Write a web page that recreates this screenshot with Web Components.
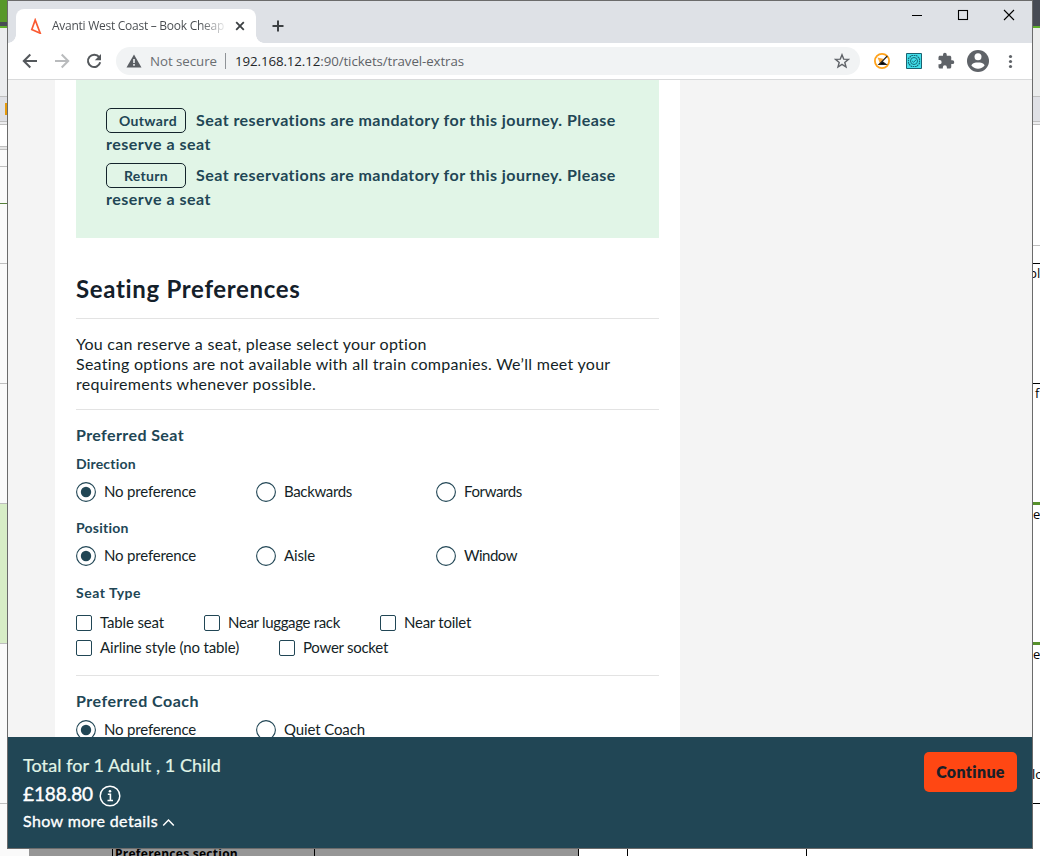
<!DOCTYPE html>
<html lang="en">
<head>
<meta charset="utf-8">
<title>Avanti West Coast – Book Cheap Train Tickets</title>
<style>
html, body { margin: 0; height: 856px; overflow: hidden; background: #fff; }
body { font-family: Lato, "Liberation Sans", sans-serif; }
</style>
</head>
<body>
<desk-top>
  <browser-window>
    <browser-tab slot="tab"></browser-tab>
    <address-bar slot="bar"></address-bar>
    <travel-extras></travel-extras>
    <basket-bar slot="footer"></basket-bar>
  </browser-window>
</desk-top>
<script>
const fitted = [];
function define(name, markup, Base = HTMLElement) {
  const t = document.createElement('template');
  customElements.define(name, class extends Base {
    constructor() {
      super();
      t.innerHTML = typeof markup === 'function' ? markup(this) : markup;
      this.attachShadow({ mode: 'open' }).append(document.importNode(t.content, true));
    }
  });
}

/* A single line of text, tracked so that it takes exactly w pixels. */
customElements.define('fit-text', class extends HTMLElement {
  constructor() {
    super();
    this.attachShadow({ mode: 'open' }).innerHTML =
      '<style>:host{display:inline-block;white-space:nowrap;flex:none}</style><slot></slot>';
  }
  connectedCallback() { fitted.push(this); }
  fit() {
    const w = +this.getAttribute('w');
    this.style.width = 'max-content';
    this.style.letterSpacing = '0px';
    const n = this.textContent.length, now = this.getBoundingClientRect().width;
    if (n && now) this.style.letterSpacing = ((w - now) / n).toFixed(4) + 'px';
    this.style.width = w + 'px';
  }
});

/* The application behind the browser window: only its edges show. */
define('desk-top', `
<style>
:host { display: block; position: relative; width: 1040px; height: 856px; overflow: hidden; font-family: "Open Sans", sans-serif; }
.back { display: grid; grid-template-columns: 8px 1fr 8px; grid-template-rows: 848px 8px; height: 856px; }
.side { display: flex; flex-direction: column; overflow: hidden; font-size: 13px; line-height: 19px; color: #000; }
.side div { box-sizing: border-box; flex: none; overflow: hidden; }
.line { border-top: 1px solid #bfbfbf; }
.k { border-top: 1px solid #000; }
.g { border-top: 3px solid #56902b; }
.right span { display: block; white-space: nowrap; }
.bottom { grid-column: 1 / 4; display: flex; background: #fff; overflow: hidden; }
.bottom div { box-sizing: border-box; flex: none; border-right: 1px solid #000; background: #969696; }
.bottom .w { background: #fff; }
.bottom fit-text { display: block; font-weight: 700; font-size: 12px; line-height: 12px; margin-left: 2px; }
::slotted(*) { position: absolute; left: 7px; top: 0; }
</style>
<div class="back">
  <div class="side left">
    <div style="height:22px;background:#58982a"></div><div style="height:4px;background:#474b54"></div>
    <div style="height:2px;background:#5fae2c"></div><div style="height:68px;background:#ebecee"></div>
    <div class="line" style="height:7px;background:#dfe0e5"></div>
    <div style="height:12px;background:#dfe0e5;border-right:3px solid #e59a0c"></div>
    <div style="height:6px;background:#dfe0e5"></div>
    <div class="line" style="height:3px;background:#ececee"></div>
    <div class="line" style="height:22px;background:#fff"></div>
    <div class="line" style="height:3px;background:#e6e6e6"></div>
    <div class="line" style="height:17px;background:#fafafa"></div>
    <div class="line" style="height:37px;background:#fafafa"></div>
    <div style="height:60px;background:#fafafa;border-top:1px solid #56803a"></div>
    <div class="line" style="height:120px;background:#fafafa"></div>
    <div class="line" style="height:120px;background:#fafafa"></div>
    <div class="line" style="height:140px;background:#d7edc6"></div>
    <div class="line" style="height:160px;background:#fafafa"></div>
    <div class="line" style="height:45px;background:#fafafa"></div>
  </div>
  <div></div>
  <div class="side right">
    <div style="height:26px;background:#474b54"></div><div style="height:2px;background:#5fae2c"></div>
    <div style="height:68px;background:#ebecec"></div>
    <div class="line" style="height:25px;background:#dfe0e5"></div>
    <div class="line" style="height:3px;background:#ececee"></div>
    <div class="line" style="height:121px"></div>
    <div class="line" style="height:18px"></div>
    <div class="k" style="height:120px"><span style="margin-left:-3px">pl</span></div>
    <div class="k" style="height:119px"><span style="margin-left:3px">f</span></div>
    <div class="g" style="height:140px"><span style="margin-left:1px">e</span></div>
    <div class="g" style="height:120px"><span style="margin-left:1px">e</span></div>
    <div style="height:41px"><span style="margin-left:0;margin-top:3px">lo</span></div>
    <div class="k" style="height:45px"></div>
  </div>
  <div class="bottom">
    <div class="w" style="width:29px;border:0;background:#fafafa"></div>
    <div style="width:84px"></div>
    <div style="width:202px"><fit-text w="123">Preferences section</fit-text></div>
    <div style="width:264px"></div>
    <div class="w" style="width:49px"></div>
    <div class="w" style="width:179px"></div>
  </div>
</div>
<slot></slot>`);

define('browser-window', `
<style>
:host { display: flex; flex-direction: column; box-sizing: border-box; width: 1026px; height: 849px; border: 1px solid #6b6b6b; background: #fff; font-family: "Open Sans", sans-serif; }
.strip { display: flex; height: 42px; background: #dee1e6; flex: none; padding-left: 8px; align-items: flex-end; }
.plus { margin: 0 0 10px 15px; }
.ctl { margin: 0 -2px 0 auto; align-self: flex-start; display: flex; }
svg { display: block; }
.page { flex: 1; min-height: 0; overflow: hidden; }
</style>
<div class="strip"><slot name="tab"></slot>
<svg class="plus" width="14" height="14"><path d="M7 1.5v11M1.5 7h11" stroke="#3c4043" stroke-width="2" fill="none"/></svg>
<div class="ctl">
<svg width="46" height="29"><path d="M16 14.5h10" stroke="#000"/></svg>
<svg width="46" height="29"><rect x="16.5" y="9.5" width="9" height="9" fill="none" stroke="#000" stroke-width="1.1"/></svg>
<svg width="46" height="29"><path d="M16 9l10 10M26 9l-10 10" stroke="#000" stroke-width="1.1"/></svg>
</div></div>
<slot name="bar"></slot>
<div class="page"><slot></slot></div>
<slot name="footer"></slot>`);

define('browser-tab', `
<style>
:host { display: flex; position: relative; align-items: center; box-sizing: border-box; width: 240px; height: 34px; background: #fff; border-radius: 8px 8px 0 0; padding-left: 12px; }
:host::before, :host::after { content: ""; position: absolute; bottom: 0; width: 8px; height: 8px; }
:host::before { left: -8px; background: radial-gradient(circle at 0 0, transparent 7.5px, #fff 8px); }
:host::after { right: -8px; background: radial-gradient(circle at 100% 0, transparent 7.5px, #fff 8px); }
fit-text { margin-left: 8px; font-size: 12px; line-height: 18px; color: transparent; background: linear-gradient(90deg, #45494d 86%, #45494d22 100%); -webkit-background-clip: text; background-clip: text; }
.x { margin-left: 11px; }
</style>
<svg width="16" height="16"><path d="M7.2 2L3.8 11.5L12.2 15.2Z" fill="none" stroke="#fa5a32" stroke-width="1.7"/></svg>
<fit-text w="172">Avanti West Coast – Book Cheap</fit-text>
<svg class="x" width="10" height="10"><path d="M1.2 1.2l7.6 7.6M8.8 1.2L1.2 8.8" stroke="#3c4043" stroke-width="1.8"/></svg>`);

define('address-bar', `
<style>
:host { display: flex; align-items: center; box-sizing: border-box; flex: none; height: 37px; border-bottom: 1px solid #d9dadb; background: #fff; padding-left: 14px; font-size: 13.3px; line-height: 20px; }
svg { display: block; flex: none; }
.nav { display: flex; gap: 16px; width: 94px; flex: none; }
.omni { display: flex; align-items: center; box-sizing: border-box; width: 744px; height: 28px; border-radius: 14px; background: #f1f3f4; padding: 0 10px; flex: none; }
.omni i { width: 1px; height: 16px; background: #8f9397; margin: 0 9px 0 8px; }
.omni .star { margin-left: auto; }
.ext { display: flex; align-items: center; margin-left: 14px; }
</style>
<div class="nav">
<svg width="16" height="16"><path d="M15 8H2M8.3 1.5L1.8 8l6.5 6.5" fill="none" stroke="#54585c" stroke-width="2"/></svg>
<svg width="16" height="16"><path d="M1 8h13M7.7 1.5L14.2 8l-6.5 6.5" fill="none" stroke="#b9bbbd" stroke-width="2"/></svg>
<svg width="16" height="16"><path d="M13.2 4.2A6.2 6.2 0 1 0 14.2 9.3" fill="none" stroke="#54585c" stroke-width="2"/><path d="M15 1v6.2H8.8z" fill="#54585c"/></svg>
</div>
<div class="omni">
<svg width="16" height="16"><path d="M8 1.5L15.5 14.5H.5z" fill="#5a5e63"/><path d="M8 6v4M8 11v1.8" stroke="#f1f3f4" stroke-width="1.6"/></svg>
<fit-text w="67" style="margin-left:8px;color:#6a6e72">Not secure</fit-text><i></i>
<fit-text w="229" style="color:#5f6368"><span style="color:#24272a">192.168.12.12</span>:90/tickets/travel-extras</fit-text>
<svg class="star" width="16" height="16"><path d="M8 1.8l1.7 4.3 4.7.3-3.6 3 1.2 4.6L8 11.4 4 14l1.2-4.6-3.6-3 4.7-.3z" fill="none" stroke="#5f6368" stroke-width="1.4"/></svg>
</div>
<div class="ext">
<svg width="16" height="16"><circle cx="8" cy="8" r="7.1" fill="#fff" stroke="#ffa21a" stroke-width="1.8"/><path d="M3.5 4.5L10 6l-4 5-1-3z" fill="#f9a634"/><path d="M13.3 3L5.8 10.8M8 8.5l4 3H5z" stroke="#222" stroke-width="1.2"/></svg>
<svg width="16" height="16" style="margin-left:16px"><path d="M.5.5h15v15H.5z" fill="#43dfea" stroke="#1b6270"/><path d="M5.5 2.5h5l3 3v5l-3 3h-5l-3-3v-5z" fill="none" stroke="#166a79" stroke-width="1.2" stroke-dasharray="1.7 .6"/><circle cx="8" cy="8" r="3.5" fill="none" stroke="#166a79"/><path d="M6.2 8l1.4 1.3L10 6.8" fill="none" stroke="#166a79"/></svg>
<svg width="18" height="18" viewBox="0 0 24 24" style="margin-left:15px"><path fill="#5f6368" d="M20.5 11H19V7c0-1.1-.9-2-2-2h-4V3.5a2.5 2.5 0 0 0-5 0V5H4c-1.100 0-2 .9-2 2v3.800h1.500a2.700 2.700 0 0 1 0 5.400H2V20c0 1.100.9 2 2 2h3.800v-1.500a2.700 2.700 0 0 1 5.400 0V22H17c1.100 0 2-.9 2-2v-4h1.500a2.500 2.500 0 0 0 0-5z"/></svg>
<svg width="22" height="22" viewBox="0 0 22 22" style="margin-left:12px"><circle cx="11" cy="11" r="11" fill="#5f6368"/><circle cx="11" cy="6.800" r="3.500" fill="#fff"/><path d="M4.400 15.500C5 12.800 8.500 12.400 11 12.400s6 .4 6.600 3.100C16.200 17.500 13.800 18.700 11 18.700s-5.200-1.200-6.600-3.200z" fill="#fff"/></svg>
<svg width="6" height="16" style="margin-left:18px" fill="#5f6368"><circle cx="3.500" cy="3.500" r="1.600"/><circle cx="3.500" cy="8.500" r="1.600"/><circle cx="3.500" cy="13.500" r="1.600"/></svg>
</div>`);

define('seat-notice', `
<style>
:host { display: block; font-weight: 700; font-size: 16px; line-height: 23px; color: #214655; }
.row { display: flex; align-items: center; height: 25px; gap: 10px; }
.row > fit-text { padding-bottom: 2px; }
.tag { box-sizing: border-box; width: 80px; height: 25px; border: 1px solid #14242c; border-radius: 5px; display: flex; justify-content: center; font-size: 14px; line-height: 24px; }
.second { display: block; line-height: 21px; padding-bottom: 2px; }
</style>
<div class="row"><div class="tag"><slot name="leg"></slot></div><fit-text w="420">Seat reservations are mandatory for this journey. Please</fit-text></div>
<fit-text class="second" w="105">reserve a seat</fit-text>`);

define('radio-option', h => `
<style>
:host { display: flex; align-items: center; gap: 8px; width: 180px; height: 20px; font-size: 15px; line-height: 19px; color: #141f27; }
svg { display: block; flex: none; }
::slotted(*) { padding-bottom: 1px; }
</style>
<svg width="20" height="20"><circle cx="10" cy="10" r="9.400" fill="#fff" stroke="#214655" stroke-width="1.100"/>${h.hasAttribute('checked') ? '<circle cx="10" cy="10" r="5.200" fill="#214655"/>' : ''}</svg><slot></slot>`);

define('check-option', `
<style>
:host { display: flex; align-items: center; gap: 8px; height: 16px; font-size: 15px; line-height: 18px; color: #141f27; }
b { box-sizing: border-box; width: 16px; height: 16px; border: 1px solid #214655; border-radius: 2px; background: #fff; flex: none; }
::slotted(*) { padding-bottom: 2px; }
</style>
<b></b><slot></slot>`);

define('travel-extras', `
<style>
:host { display: block; background: #f4f4f4; height: 100%; font-family: Lato, "Liberation Sans", sans-serif; }
main { box-sizing: border-box; width: 625px; height: 100%; margin-left: 47px; padding: 0 21px; background: #fff; }
.green { box-sizing: border-box; height: 158px; background: #e1f5e7; padding: 28px 0 0 30px; display: flex; flex-direction: column; gap: 7px; }
h2, h3, h4, p { margin: 0; }
fit-text { display: block; }
h2 { font-size: 24px; font-weight: 700; line-height: 30px; padding: 36px 0 14px; color: #14202a; }
h3 { font-size: 16px; font-weight: 700; line-height: 20px; color: #214655; }
h4 { font-size: 14px; font-weight: 700; line-height: 18px; color: #214655; }
hr { margin: 0; border: 0; height: 1px; background: #e3e3e3; }
p { padding: 15px 0; font-size: 16px; line-height: 20px; color: #141f27; }
.row { display: flex; }
.checks { display: flex; gap: 40px; }
</style>
<main>
<div class="green">
<seat-notice><fit-text slot="leg" w="58" style="margin-left:4px">Outward</fit-text></seat-notice>
<seat-notice><fit-text slot="leg" w="44">Return</fit-text></seat-notice>
</div>
<h2><fit-text w="225">Seating Preferences</fit-text></h2>
<hr>
<p><fit-text w="351">You can reserve a seat, please select your option</fit-text><fit-text w="535">Seating options are not available with all train companies. We’ll meet your</fit-text><fit-text w="240">requirements whenever possible.</fit-text></p>
<hr>
<h3 style="padding:15px 0 1px"><fit-text w="108">Preferred Seat</fit-text></h3>
<h4 style="padding:9px 0"><fit-text w="60">Direction</fit-text></h4>
<div class="row"><radio-option checked><fit-text w="92">No preference</fit-text></radio-option><radio-option><fit-text w="68">Backwards</fit-text></radio-option><radio-option><fit-text w="58">Forwards</fit-text></radio-option></div>
<h4 style="padding:17px 0 9px"><fit-text w="53">Position</fit-text></h4>
<div class="row"><radio-option checked><fit-text w="92">No preference</fit-text></radio-option><radio-option><fit-text w="31">Aisle</fit-text></radio-option><radio-option><fit-text w="53">Window</fit-text></radio-option></div>
<h4 style="padding:18px 0 13px"><fit-text w="65">Seat Type</fit-text></h4>
<div class="checks"><check-option><fit-text w="64">Table seat</fit-text></check-option><check-option><fit-text w="112">Near luggage rack</fit-text></check-option><check-option><fit-text w="67">Near toilet</fit-text></check-option></div>
<div class="checks" style="padding:9px 0 19px"><check-option><fit-text w="139">Airline style (no table)</fit-text></check-option><check-option><fit-text w="85">Power socket</fit-text></check-option></div>
<hr>
<h3 style="padding:15px 0 9px"><fit-text w="123">Preferred Coach</fit-text></h3>
<div class="row"><radio-option checked><fit-text w="92">No preference</fit-text></radio-option><radio-option><fit-text w="81">Quiet Coach</fit-text></radio-option></div>
</main>`);

define('basket-bar', `
<style>
:host { display: flex; justify-content: space-between; align-items: flex-start; box-sizing: border-box; flex: none; height: 111px; background: #214655; color: #fff; padding: 15px 15px 0; font-family: Lato, "Liberation Sans", sans-serif; }
.sum { display: flex; flex-direction: column; margin-top: -1px; }
.sum div { display: flex; align-items: center; }
svg { display: block; flex: none; }
button { box-sizing: border-box; border: 0; width: 93px; height: 40px; border-radius: 5px; background: #ff4713; color: #1b1f27; font: 800 16px/40px Lato, sans-serif; padding: 0; }
</style>
<div class="sum">
<div style="height:28px;font-size:18px;color:#e1f5e7"><fit-text w="198" style="-webkit-text-stroke:.2px #e1f5e7">Total for 1 Adult , 1 Child</fit-text></div>
<div style="height:29px;font-size:19px;gap:6px"><fit-text w="70" style="-webkit-text-stroke:.4px #fff">£188.80</fit-text><svg width="22" height="22" style="margin-top:4px"><circle cx="11" cy="11" r="9.800" fill="none" stroke="#fff" stroke-width="1.500"/><path d="M8.800 9.300h2.600v6.200M8.500 15.500h5.500" fill="none" stroke="#fff" stroke-width="1.600"/><circle cx="11" cy="6.300" r="1.300" fill="#fff"/></svg></div>
<div style="height:24px;font-size:16px;gap:4px"><fit-text w="135" style="-webkit-text-stroke:.35px #fff">Show more details</fit-text><svg width="13" height="9" style="margin-top:5px"><path d="M1.200 7.500L6.500 2l5.300 5.500" fill="none" stroke="#fff" stroke-width="1.500"/></svg></div>
</div>
<button><fit-text w="69">Continue</fit-text></button>`);

fitted.forEach(e => e.fit());
</script>
</body>
</html>
